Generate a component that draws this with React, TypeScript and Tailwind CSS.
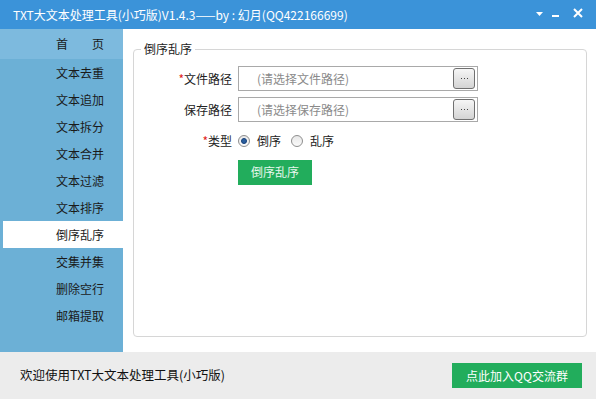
import React from 'react';

const menu = ['首页', '文本去重', '文本追加', '文本拆分', '文本合并', '文本过滤', '文本排序', '倒序乱序', '交集并集', '删除空行', '邮箱提取'];

function PathRow({ label, required, placeholder }: { label: string; required?: boolean; placeholder: string }) {
    return (
        <div className="flex items-center h-[25px]">
            <div className="w-[104px] pr-[6px] text-right text-[12px] text-[#222]">
                {required && <span className="text-[#e02020]">*</span>}
                {label}
            </div>
            <div className="w-[240px] h-[25px] border border-[#a9a9a9] flex items-center justify-between pl-[18px] pr-[2px]">
                <span className="text-[12px] text-[#8a8a8a]">{placeholder}</span>
                <span className="w-[22px] h-[21px] rounded-[3px] border border-[#707070] bg-gradient-to-b from-[#f6f6f6] to-[#d4d4d4] flex items-center justify-center gap-[2px]">
                    <span className="w-[1px] h-[1px] bg-[#444]" />
                    <span className="w-[1px] h-[1px] bg-[#444]" />
                    <span className="w-[1px] h-[1px] bg-[#444]" />
                </span>
            </div>
        </div>
    );
}

function Radio({ checked }: { checked?: boolean }) {
    return (
        <span className="w-[12px] h-[12px] rounded-full border border-[#8e8e8e] bg-gradient-to-b from-[#e8e8e8] to-[#fafafa] flex items-center justify-center">
            {checked && <span className="w-[6px] h-[6px] rounded-full bg-[#2b5f9e] border border-[#17407a]" />}
        </span>
    );
}

export default function App() {
    return (
        <div
            className="w-[596px] h-[399px] flex flex-col bg-white overflow-hidden"
            style={{ fontFamily: '"Noto Sans CJK SC", "Liberation Sans", sans-serif' }}
        >
            <div className="h-[29px] bg-[#3b93d9] flex items-center pl-[13px] pr-[3px] text-white">
                <span className="text-[12px] flex-1">TXT大文本处理工具(小巧版)V1.4.3——by : 幻月(QQ422166699)</span>
                <svg width="60" height="16" viewBox="0 0 60 16" className="mt-[-4px]">
                    <path d="M3 7 L10 7 L6.5 11 Z" fill="#fff" />
                    <rect x="19" y="10" width="7" height="2" fill="#fff" />
                    <path d="M41 4 L49 12 M49 4 L41 12" stroke="#fff" strokeWidth="2" />
                </svg>
            </div>

            <div className="flex h-[323px]">
                <div className="w-[123px] bg-[#6cb0d6] flex flex-col">
                    {menu.map((m, i) => {
                        let cls = 'h-[27px] pl-[56px]';
                        if (i === 0) cls = 'h-[30px] pl-[56px] bg-[#7dbade]';
                        if (i === 7) cls = 'h-[27px] ml-[3px] pl-[53px] bg-white';
                        return (
                            <div key={m} className={'flex items-center text-[12px] text-[#1a1a1a] ' + cls}>
                                {i === 0 ? (
                                    <span className="flex gap-[24px]">
                                        <span>首</span>
                                        <span>页</span>
                                    </span>
                                ) : (
                                    m
                                )}
                            </div>
                        );
                    })}
                </div>

                <div className="flex-1 pl-[10px] pr-[9px] pt-[11px] pb-[15px]">
                    <fieldset className="h-full border border-[#d6d6d6] rounded-[4px] pl-0 pt-[8px]">
                        <legend className="ml-[7px] px-[3px] text-[12px] text-[#222]">倒序乱序</legend>
                        <div className="flex flex-col gap-[6px]">
                            <PathRow label="文件路径" required placeholder="(请选择文件路径)" />
                            <PathRow label="保存路径" placeholder="(请选择保存路径)" />
                        </div>
                        <div className="flex items-center h-[20px] mt-[9px]">
                            <div className="w-[104px] pr-[6px] text-right text-[12px] text-[#222]">
                                <span className="text-[#e02020]">*</span>类型
                            </div>
                            <Radio checked />
                            <span className="ml-[7px] text-[12px] text-[#222]">倒序</span>
                            <span className="ml-[10px]">
                                <Radio />
                            </span>
                            <span className="ml-[7px] text-[12px] text-[#222]">乱序</span>
                        </div>
                        <div className="pl-[104px] mt-[7px]">
                            <button className="w-[74px] h-[25px] bg-[#22ad5c] text-[12px] text-[#e6f7ec]">倒序乱序</button>
                        </div>
                    </fieldset>
                </div>
            </div>

            <div className="flex-1 bg-[#ececec] flex items-center justify-between pl-[20px] pr-[14px]">
                <span className="text-[12.5px] text-[#111]">欢迎使用TXT大文本处理工具(小巧版)</span>
                <button className="w-[130px] h-[25px] bg-[#22ad5c] text-[12px] text-white">点此加入QQ交流群</button>
            </div>
        </div>
    );
}
